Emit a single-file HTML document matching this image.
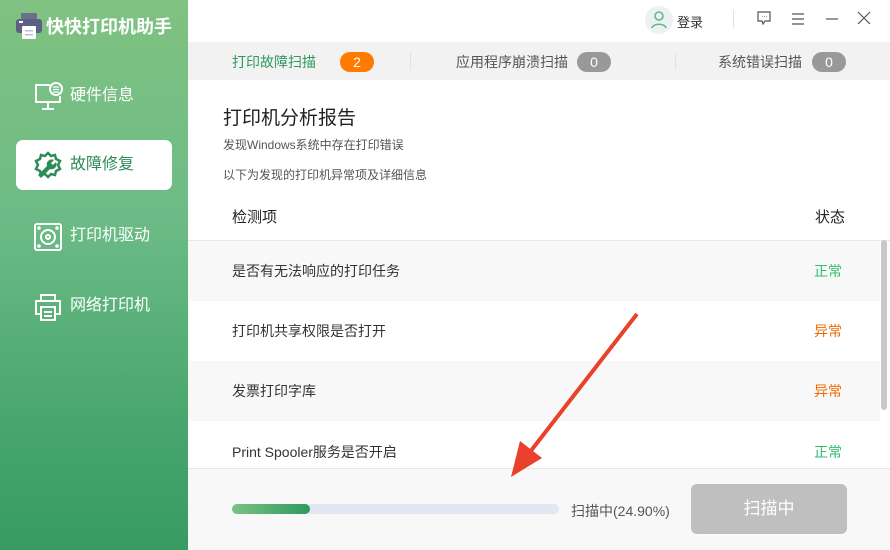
<!DOCTYPE html>
<html><head><meta charset="utf-8"><style>
*{margin:0;padding:0;box-sizing:border-box}
body{width:890px;height:550px;overflow:hidden;font-family:"Liberation Sans","Noto Sans CJK SC",sans-serif;background:#fff;position:relative;color:#333}
.side{position:absolute;left:0;top:0;width:188px;height:550px;background:linear-gradient(180deg,#80c281 0%,#6cbb86 40%,#4aa76e 75%,#379b62 100%)}
.logo{position:absolute;left:46px;top:13px;color:#fff;font-size:18px;font-weight:bold;letter-spacing:0px}
.nav{position:absolute;left:16px;width:156px;height:50px;color:#fff;font-size:16px;line-height:50px;padding-left:54px}
.nav.act{background:#fff;border-radius:7px;color:#2e8b57}
.nav svg{position:absolute;left:17px;top:11px}
.abs{position:absolute}
.tabs{position:absolute;left:188px;top:42px;width:702px;height:38px;background:#f2f2f2;font-size:14px;color:#555}
.badge{position:absolute;height:20px;border-radius:10px;color:#fff;font-size:14px;text-align:center;line-height:20px;width:34px}
.row{position:absolute;left:188px;width:692px;height:60px;font-size:14px;line-height:60px;padding-left:44px}
.row span{position:absolute;right:38px;top:0}
.g{color:#2fbf6f}.o{color:#f06a00}
</style></head><body>
<div class="side">
 <svg class="abs" style="left:15px;top:12px" width="28" height="28" viewBox="0 0 28 28"><rect x="6" y="1" width="16" height="6" rx="1" fill="#6a7089"/><rect x="1" y="7" width="26" height="14" rx="3" fill="#5b6183"/><rect x="4" y="9" width="4" height="2" fill="#fff"/><rect x="7" y="14" width="14" height="13" rx="1" fill="#fff"/><rect x="10" y="18" width="8" height="1.5" fill="#b9bde0"/><rect x="10" y="22" width="8" height="1.5" fill="#b9bde0"/></svg>
 <div class="logo">快快打印机助手</div>
 <div class="nav" style="top:71px"><svg width="30" height="30" viewBox="0 0 30 30" fill="none" stroke="#fff" stroke-width="2"><path d="M17 3H3v17h24v-6"/><path d="M15 20v6M9 27h12"/><circle cx="23" cy="7" r="6"/><path d="M20 5h6M20 7.5h6M20 10h6" stroke-width="1.3"/></svg>硬件信息</div>
 <div class="nav act" style="top:140px"><svg width="30" height="30" viewBox="0 0 30 30" fill="#2e8b57"><path d="M15 2l3 3 4-1 1 4 4 2-2 4 2 4-4 2-1 4-4-1-3 3-3-3-4 1-1-4-4-2 2-4-2-4 4-2 1-4 4 1z" fill="none" stroke="#2e8b57" stroke-width="2.5"/><path d="M21 9a5 5 0 0 0-7 6l-9 9 3 3 9-9a5 5 0 0 0 6-7l-3 3-2-2z"/></svg>故障修复</div>
 <div class="nav" style="top:211px"><svg width="30" height="30" viewBox="0 0 30 30" fill="none" stroke="#fff" stroke-width="2"><rect x="2" y="2" width="26" height="26" rx="2"/><circle cx="15" cy="15" r="7"/><circle cx="15" cy="15" r="2"/><circle cx="6" cy="6" r=".8" fill="#fff"/><circle cx="24" cy="6" r=".8" fill="#fff"/><circle cx="6" cy="24" r=".8" fill="#fff"/><circle cx="24" cy="24" r=".8" fill="#fff"/></svg>打印机驱动</div>
 <div class="nav" style="top:281px"><svg width="30" height="30" viewBox="0 0 30 30" fill="none" stroke="#fff" stroke-width="2"><path d="M8 8V3h14v5"/><path d="M7 22H3V9h24v13h-4"/><rect x="8" y="15" width="14" height="13"/><path d="M11 20h8M11 24h8"/></svg>网络打印机</div>
</div>
<div class="abs" style="left:645px;top:6px;width:28px;height:28px;border-radius:14px;background:#eef1f4"><svg width="28" height="28" viewBox="0 0 28 28" fill="none" stroke="#5bbd83" stroke-width="1.6"><circle cx="14" cy="10" r="4"/><path d="M7 22c1-5 13-5 14 0"/></svg></div>
<div class="abs" style="left:677px;top:12px;font-size:13px;color:#333">登录</div>
<div class="abs" style="left:733px;top:10px;width:1px;height:18px;background:#e2e2e2"></div>
<svg class="abs" style="left:757px;top:11px" width="14" height="14" viewBox="0 0 14 14" fill="none" stroke="#555" stroke-width="1.2"><path d="M1 1h12v9H8l-2 3-1-3H1z"/><path d="M5 5.5h.5M7 5.5h.5M9 5.5h.5"/></svg>
<svg class="abs" style="left:791px;top:12px" width="14" height="14" viewBox="0 0 14 14" stroke="#555" stroke-width="1.2"><path d="M1 2h12M1 7h12M1 12h12"/></svg>
<svg class="abs" style="left:825px;top:12px" width="14" height="14" viewBox="0 0 14 14" stroke="#555" stroke-width="1.2"><path d="M1 7h12"/></svg>
<svg class="abs" style="left:857px;top:11px" width="14" height="14" viewBox="0 0 14 14" stroke="#555" stroke-width="1.2"><path d="M1 1l12 12M13 1L1 13"/></svg>
<div class="tabs">
 <div class="abs" style="left:44px;top:10px;color:#2e9a5d">打印故障扫描</div>
 <div class="badge" style="left:152px;top:10px;background:#ff7a00">2</div>
 <div class="abs" style="left:222px;top:10px;width:1px;height:18px;background:#e2e2e2"></div>
 <div class="abs" style="left:268px;top:10px">应用程序崩溃扫描</div>
 <div class="badge" style="left:389px;top:10px;background:#999">0</div>
 <div class="abs" style="left:487px;top:10px;width:1px;height:18px;background:#e2e2e2"></div>
 <div class="abs" style="left:530px;top:10px">系统错误扫描</div>
 <div class="badge" style="left:624px;top:10px;background:#999">0</div>
</div>
<div class="abs" style="left:223px;top:103px;font-size:19px;color:#222">打印机分析报告</div>
<div class="abs" style="left:223px;top:136px;font-size:12px;color:#555">发现Windows系统中存在打印错误</div>
<div class="abs" style="left:223px;top:166px;font-size:12px;color:#555">以下为发现的打印机异常项及详细信息</div>
<div class="abs" style="left:232px;top:206px;font-size:15px;color:#222">检测项</div>
<div class="abs" style="left:815px;top:206px;font-size:15px;color:#222">状态</div>
<div class="abs" style="left:188px;top:240px;width:702px;height:1px;background:#e8e8e8"></div>
<div class="row" style="top:241px;background:#f8f8f8">是否有无法响应的打印任务<span class="g">正常</span></div>
<div class="row" style="top:301px">打印机共享权限是否打开<span class="o">异常</span></div>
<div class="row" style="top:361px;background:#f8f8f8">发票打印字库<span class="o">异常</span></div>
<div class="row" style="top:421px;height:47px;line-height:62px">Print Spooler服务是否开启<span class="g">正常</span></div>
<div class="abs" style="left:881px;top:240px;width:6px;height:170px;border-radius:3px;background:#c8c8c8"></div>
<div class="abs" style="left:188px;top:468px;width:702px;height:82px;background:#f8f8f8;border-top:1px solid #e6e6e6"></div>
<div class="abs" style="left:232px;top:504px;width:327px;height:10px;border-radius:5px;background:#e1e8f2"><div style="width:78px;height:10px;border-radius:5px;background:linear-gradient(90deg,#7ac184,#2e9a5d)"></div></div>
<div class="abs" style="left:571px;top:501px;font-size:14px;color:#555">扫描中(24.90%)</div>
<div class="abs" style="left:691px;top:484px;width:156px;height:50px;border-radius:6px;background:#bfbfbf;color:#fff;font-size:17px;text-align:center;line-height:50px">扫描中</div>
<svg class="abs" style="left:0;top:0" width="890" height="550"><path d="M637 314L530 452" stroke="#e8412c" stroke-width="4"/><path d="M511 477L520 441L542 458Z" fill="#e8412c"/></svg>
</body></html>
